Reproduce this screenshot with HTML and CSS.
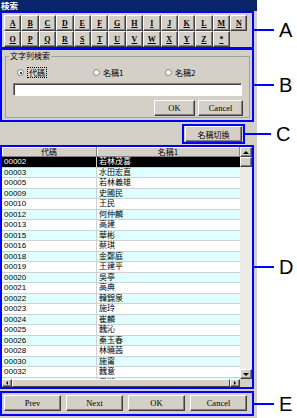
FILE: index.html
```html
<!DOCTYPE html>
<html lang="zh-Hant">
<head>
  <meta charset="UTF-8" />
  <meta name="viewport" content="width=device-width, initial-scale=1.0"/>
  <title>検索</title>
  <link rel="stylesheet" href="styles.css">
</head>
<body>
  <div class="window">
    <div class="titlebar">検索</div>

    <div class="callout callout-a">
      <div class="letters">
        <button class="key">A</button><button class="key">B</button><button class="key">C</button>
        <button class="key">D</button><button class="key">E</button><button class="key">F</button>
        <button class="key">G</button><button class="key">H</button><button class="key">I</button>
        <button class="key">J</button><button class="key">K</button><button class="key">L</button>
        <button class="key">M</button><button class="key">N</button>
        <button class="key">O</button><button class="key">P</button><button class="key">Q</button>
        <button class="key">R</button><button class="key">S</button><button class="key">T</button>
        <button class="key">U</button><button class="key">V</button><button class="key">W</button>
        <button class="key">X</button><button class="key">Y</button><button class="key">Z</button>
        <button class="key">*</button>
      </div>
      <span class="tag">A</span>
    </div>

    <div class="callout callout-b">
      <fieldset class="group">
        <legend>文字列検索</legend>
        <div class="radios">
          <label class="radio"><span class="dot on"></span><span class="focus">代碼</span></label>
          <label class="radio"><span class="dot"></span>名稱1</label>
          <label class="radio"><span class="dot"></span>名稱2</label>
        </div>
        <div class="field"></div>
        <div class="actions">
          <button class="btn btn-ok">OK</button>
          <button class="btn btn-cancel">Cancel</button>
        </div>
      </fieldset>
      <span class="tag">B</span>
    </div>

    <div class="callout callout-c">
      <button class="btn btn-switch">名稱切換</button>
      <span class="tag tag-c">C</span>
    </div>

    <div class="callout callout-d">
      <div class="grid-main">
        <div class="grid-view">
          <div class="head"><span>代碼</span><span>名稱1</span></div>
          <div class="row sel"><span>00002</span><span>若林茂喜</span></div>
          <div class="row alt"><span>00003</span><span>水田宏直</span></div>
          <div class="row"><span>00005</span><span>若林義雄</span></div>
          <div class="row alt"><span>00009</span><span>史國民</span></div>
          <div class="row"><span>00010</span><span>王民</span></div>
          <div class="row alt"><span>00012</span><span>何仲麟</span></div>
          <div class="row"><span>00013</span><span>高建</span></div>
          <div class="row alt"><span>00015</span><span>華彬</span></div>
          <div class="row"><span>00016</span><span>蔡琪</span></div>
          <div class="row alt"><span>00018</span><span>金鄭庭</span></div>
          <div class="row"><span>00019</span><span>王建平</span></div>
          <div class="row alt"><span>00020</span><span>吳亭</span></div>
          <div class="row"><span>00021</span><span>高典</span></div>
          <div class="row alt"><span>00022</span><span>韓錦泉</span></div>
          <div class="row"><span>00023</span><span>施玲</span></div>
          <div class="row alt"><span>00024</span><span>崔麟</span></div>
          <div class="row"><span>00025</span><span>魏沁</span></div>
          <div class="row alt"><span>00026</span><span>秦玉春</span></div>
          <div class="row"><span>00028</span><span>林曉茜</span></div>
          <div class="row alt"><span>00030</span><span>施甯</span></div>
          <div class="row"><span>00032</span><span>魏意</span></div>
          <div class="row alt"><span>00034</span><span>周淑</span></div>
        </div>
        <div class="vscroll">
          <div class="sb-btn"><span class="arrow up"></span></div>
          <div class="sb-btn"></div>
          <div class="track"></div>
          <div class="sb-btn"><span class="arrow down"></span></div>
        </div>
      </div>
      <div class="hscroll">
        <div class="sb-btn sb-h"><span class="arrow left"></span></div>
        <div class="hthumb"></div>
        <div class="sb-btn sb-h"><span class="arrow right"></span></div>
        <div class="corner"></div>
      </div>
      <span class="tag">D</span>
    </div>

    <div class="callout callout-e">
      <button class="btn btn-nav">Prev</button>
      <button class="btn btn-nav">Next</button>
      <button class="btn btn-nav">OK</button>
      <button class="btn btn-nav">Cancel</button>
      <span class="tag">E</span>
    </div>
  </div>
</body>
</html>
```

FILE: styles.css
```css
* {
  box-sizing: border-box;
}
body {
  margin: 0;
  background: #fff;
  font-family: "Noto Sans CJK TC", "Liberation Sans", sans-serif;
  font-size: 8px;
  color: #000;
}
.window {
  width: 257px;
  height: 418px;
  background: #d4d0c8;
}
.titlebar {
  height: 11px;
  background: #0a246a;
  color: #fff;
  font-weight: bold;
  font-size: 8.5px;
  line-height: 11px;
  padding-left: 1px;
}

/* blue annotation boxes */
.callout {
  position: relative;
  width: 254px;
  border: 2px solid #0000ff;
}
.tag {
  position: absolute;
  left: 100%;
  top: 50%;
  transform: translateY(-50%);
  display: flex;
  align-items: center;
  font: 20px "Liberation Sans", sans-serif;
  line-height: 20px;
  color: #000;
}
.tag::before {
  content: "";
  width: 22px;
  height: 2px;
  background: #0000ff;
  margin-right: 5px;
}
.tag-c::before {
  width: 28px;
}

/* buttons */
button {
  margin: 0;
  padding: 0;
  font: inherit;
  color: #000;
}
.btn, .key {
  background: #d4d0c8;
  border: 1px solid;
  border-color: #fff #404040 #404040 #fff;
  box-shadow: inset -1px -1px #808080;
}
.btn {
  height: 16px;
  font: 8.5px "Liberation Serif", serif;
}

/* A */
.callout-a {
  height: 38px;
}
.letters {
  display: grid;
  grid-template-columns: repeat(14, 17.4px);
  grid-auto-rows: 16px;
  padding: 2px 0 0 2px;
}
.key {
  font: bold 8px "Liberation Serif", serif;
  text-decoration: underline;
}

/* B */
.callout-b {
  margin-top: -1px;
  height: 74px;
}
.group {
  margin: 1px 2px 2px 3px;
  padding: 0 0 1px 0;
  border: 1px solid #a0a0a0;
  min-width: 0;
}
.group legend {
  margin-left: 3px;
  padding: 0 1px;
  font-size: 8px;
  line-height: 10px;
}
.radios {
  display: grid;
  grid-template-columns: 76px 72px auto;
  margin: 6px 0 0 11px;
  height: 10px;
  line-height: 10px;
}
.radio {
  display: flex;
  align-items: center;
  gap: 3px;
}
.dot {
  position: relative;
  width: 7px;
  height: 7px;
  border-radius: 50%;
  background: #fff;
  border: 1px solid #808080;
}
.dot.on::after {
  content: "";
  position: absolute;
  left: 1.5px;
  top: 1.5px;
  width: 2px;
  height: 2px;
  border-radius: 50%;
  background: #000;
}
.focus {
  border: 1px dotted #000;
  padding: 0 1px;
  line-height: 9px;
}
.field {
  margin: 6px 0 0 7px;
  width: 229px;
  height: 13px;
  background: #fff;
  border: 1px solid;
  border-color: #808080 #fff #fff #808080;
  box-shadow: inset 1px 1px #404040;
}
.actions {
  display: flex;
  justify-content: flex-end;
  gap: 3px;
  margin: 4px 6px 0 0;
}
.btn-ok {
  width: 41px;
}
.btn-cancel {
  width: 45px;
}

/* C */
.callout-c {
  margin: 2px 0 0 182px;
  width: 63px;
  height: 20px;
  padding: 0 1px;
}
.btn-switch {
  width: 57px;
  font: 8px "Noto Sans CJK TC", sans-serif;
}

/* D */
.callout-d {
  margin-top: 1px;
  height: 244px;
}
.grid-main {
  display: flex;
  height: 232px;
}
.grid-view {
  width: 238px;
  overflow: hidden;
  background: #fff;
  font-family: "Liberation Sans", "Noto Sans CJK TC", sans-serif;
  font-size: 8px;
}
.head {
  display: grid;
  grid-template-columns: 95px 1fr;
  height: 10px;
}
.head span {
  background: #d4d0c8;
  border-right: 1px solid #808080;
  border-bottom: 1px solid #808080;
  box-shadow: inset 1px 1px #fff;
  text-align: center;
  font-family: "Noto Sans CJK TC", sans-serif;
  line-height: 9px;
}
.row {
  display: grid;
  grid-template-columns: 95px 1fr;
  height: 10.5px;
  line-height: 10px;
  border-bottom: 1px solid #d0d0d0;
}
.row span {
  padding-left: 2px;
  white-space: nowrap;
}
.row span:first-child {
  border-right: 1px solid #d0d0d0;
}
.row.alt {
  background: #e0ffff;
}
.row.sel {
  background: #000;
  color: #fff;
}
.vscroll {
  width: 12px;
  display: flex;
  flex-direction: column;
}
.sb-btn {
  height: 10px;
  flex-shrink: 0;
  display: flex;
  align-items: center;
  justify-content: center;
  background: #d4d0c8;
  border: 1px solid;
  border-color: #fff #404040 #404040 #fff;
  box-shadow: inset -1px -1px #808080;
}
.track {
  flex: 1;
  background: #ecebe6;
}
.hscroll {
  display: flex;
  height: 8px;
}
.sb-h {
  width: 10px;
  height: 8px;
}
.hthumb {
  flex: 1;
  background: #d4d0c8;
  border: 1px solid;
  border-color: #fff #404040 #404040 #fff;
}
.corner {
  width: 12px;
  background: #d4d0c8;
}
.arrow {
  width: 0;
  height: 0;
  border: 3px solid transparent;
}
.arrow.up {
  border-top-width: 0;
  border-bottom-color: #000;
}
.arrow.down {
  border-bottom-width: 0;
  border-top-color: #000;
}
.arrow.left {
  border-width: 2px 2px 2px 0;
  border-right-color: #000;
}
.arrow.right {
  border-width: 2px 0 2px 2px;
  border-left-color: #000;
}

/* E */
.callout-e {
  margin-top: 2px;
  height: 25px;
  display: flex;
  gap: 5px;
  padding: 2px 0 0 2px;
}
.btn-nav {
  width: 57px;
}
```
